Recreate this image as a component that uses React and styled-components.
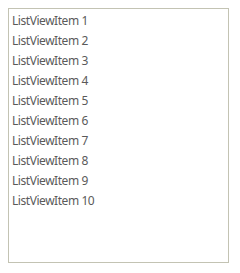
import React from 'react'
import styled, { createGlobalStyle } from 'styled-components'

const GlobalStyle = createGlobalStyle`
    body {
        margin: 0;
        background: #ffffff;
    }
`;

const StyledPage = styled.div`
    padding: 8px;
`;

const StyledListView = styled.ul`
    box-sizing: border-box;
    width: 221px;
    height: 255px;
    margin: 0;
    padding: 2px 0 0 0;
    list-style: none;
    border: 1px solid #c3c3b3;
    background: #ffffff;
`;

const StyledListViewItem = styled.li`
    height: 20px;
    line-height: 20px;
    padding-left: 3px;
    font-family: "Segoe UI", "Noto Sans", sans-serif;
    font-size: 12px;
    letter-spacing: -0.45px;
    color: #5a5a5a;
    white-space: nowrap;
`;

const items = Array.from({ length: 10 }, (_, index) => `ListViewItem ${index + 1}`);

const App = () => {
    return (
        <StyledPage>
            <GlobalStyle />
            <StyledListView>
                {items.map((item, index) => (
                    <StyledListViewItem key={`item-${index}`}>
                        {item}
                    </StyledListViewItem>
                ))}
            </StyledListView>
        </StyledPage>
    )
};

export default App;
